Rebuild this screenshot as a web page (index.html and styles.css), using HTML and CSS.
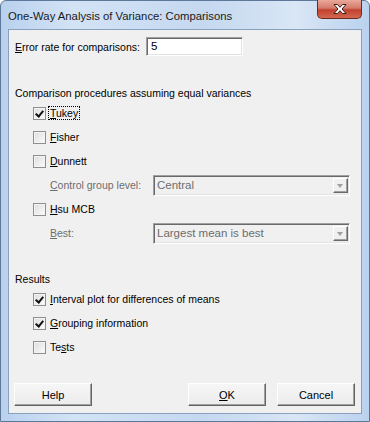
FILE: index.html
```html
<!DOCTYPE html>
<html lang="en">
<head>
    <meta charset="UTF-8">
    <title>One-Way Analysis of Variance: Comparisons</title>
    <link rel="stylesheet" href="styles.css">
</head>
<body>
<div class="window">
    <div class="titlebar">
        <span class="title">One-Way Analysis of Variance: Comparisons</span>
        <div class="close">
            <svg width="16" height="12" viewBox="0 0 16 12">
                <path d="M2 1.5 L5.5 1.5 L8 4.3 L10.5 1.5 L14 1.5 L10 6 L14 10.5 L10.5 10.5 L8 7.7 L5.5 10.5 L2 10.5 L6 6 Z" fill="#fff" stroke="#3b1d18" stroke-width="1"/>
            </svg>
        </div>
    </div>

    <div class="client">
        <div class="field-row">
            <label><u>E</u>rror rate for comparisons:</label>
            <div class="textbox">5</div>
        </div>

        <div class="heading first">Comparison procedures assuming equal variances</div>
        <div class="check-row"><span class="box checked"></span><span class="focus"><u>T</u>ukey</span></div>
        <div class="check-row"><span class="box"></span><span><u>F</u>isher</span></div>
        <div class="check-row"><span class="box"></span><span><u>D</u>unnett</span></div>
        <div class="sub-row">
            <span class="sub-label"><u>C</u>ontrol group level:</span>
            <div class="combo"><span class="combo-text">Central</span><span class="drop"></span></div>
        </div>
        <div class="check-row"><span class="box"></span><span><u>H</u>su MCB</span></div>
        <div class="sub-row">
            <span class="sub-label"><u>B</u>est:</span>
            <div class="combo"><span class="combo-text">Largest mean is best</span><span class="drop"></span></div>
        </div>

        <div class="heading results">Results</div>
        <div class="check-row"><span class="box checked"></span><span><u>I</u>nterval plot for differences of means</span></div>
        <div class="check-row"><span class="box checked"></span><span><u>G</u>rouping information</span></div>
        <div class="check-row"><span class="box"></span><span>Te<u>s</u>ts</span></div>

        <div class="buttons">
            <button class="btn">Help</button>
            <div class="spacer"></div>
            <button class="btn"><u>O</u>K</button>
            <button class="btn">Cancel</button>
        </div>
    </div>
</div>
</body>
</html>
```

FILE: styles.css
```css
body { margin: 0; font-family: "Liberation Sans", Arial, sans-serif; font-size: 10.5px; color: #000; }

.window {
    width: 370px; height: 422px; box-sizing: border-box;
    display: flex; flex-direction: column;
    background: linear-gradient(90deg, #b9d1ee 0%, #d3e3f6 20%, #c4d8f0 55%, #d9e6f5 80%, #bad1ee 100%);
    border: 1px solid #5d7898;
    border-radius: 6px 6px 0 0;
}

.titlebar { height: 28px; display: flex; align-items: flex-start; position: relative; }
.title { font-size: 11.3px; padding: 9px 0 0 7px; color: #1a1a1a; }
.close {
    position: absolute; right: 7px; top: -1px;
    width: 43px; height: 18px;
    display: flex; align-items: center; justify-content: center;
    border: 1px solid #6b2a21; border-top: none;
    border-radius: 0 0 5px 5px;
    background: linear-gradient(#e9a99b 0%, #d47a6a 45%, #c1412f 55%, #d4674f 100%);
}

.client {
    flex: 1; margin: 0 7px 7px;
    background: #f0f0f0;
    border: 1px solid #8aa1bd;
    padding: 6px 6px 0;
}

.field-row { height: 21px; display: flex; align-items: center; }
.field-row label { width: 131px; }
.textbox {
    width: 91px; height: 17px; line-height: 17px;
    background: #fff; padding-left: 4px;
    border: 1px solid; border-color: #a0a0a0 #fff #fff #a0a0a0;
    box-shadow: inset 1px 1px 0 #696969, inset -1px -1px 0 #e3e3e3;
    font-size: 11.5px;
}

.heading { height: 16px; line-height: 16px; }
.heading.first { margin-top: 28px; }
.heading.results { margin-top: 26px; }

.check-row { height: 24px; display: flex; align-items: center; padding-left: 18px; }
.box {
    width: 11px; height: 11px; margin-right: 4px;
    border: 1px solid #8e8f8f;
    background: linear-gradient(135deg, #dcdcdc, #fdfdfd);
    box-shadow: inset 0 0 0 1px #f4f4f4;
    position: relative;
}
.box.checked::after {
    content: ""; position: absolute; left: 3px; top: 1px;
    width: 3px; height: 6px;
    border: solid #111; border-width: 0 2px 2px 0;
    transform: rotate(40deg);
}
.focus { outline: 1px dotted #000; outline-offset: 0; padding: 0 1px; margin-left: -1px; }

.sub-row { height: 24px; display: flex; align-items: center; padding-left: 35px; }
.sub-label { width: 103px; color: #6d6d6d; }
.combo {
    width: 193px; height: 17px;
    display: flex; align-items: center;
    background: #f0f0f0;
    border: 1px solid; border-color: #a0a0a0 #fff #fff #a0a0a0;
    box-shadow: inset 1px 1px 0 #696969, inset -1px -1px 0 #e3e3e3;
    padding: 1px;
}
.combo-text { flex: 1; color: #6d6d6d; padding-left: 2px; font-size: 11.5px; }
.drop {
    width: 15px; height: 15px; box-sizing: border-box;
    border: 1px solid; border-color: #fff #696969 #696969 #fff;
    box-shadow: inset -1px -1px 0 #a0a0a0;
    background: #f0f0f0; position: relative;
}
.drop::after {
    content: ""; position: absolute; left: 3px; top: 5px;
    border: 3.5px solid transparent; border-top: 4px solid #a0a0a0; border-bottom: none;
}

.buttons { display: flex; margin-top: 24px; gap: 11px; margin-left: -1px; }
.spacer { flex: 1; }
.btn {
    width: 78px; height: 23px;
    font: inherit; font-size: 11px; color: #000;
    background: linear-gradient(#f6f6f6, #ececec);
    border: 1px solid; border-color: #fff #646464 #646464 #fff;
    box-shadow: inset -1px -1px 0 #a0a0a0;
    padding: 0;
}
```
